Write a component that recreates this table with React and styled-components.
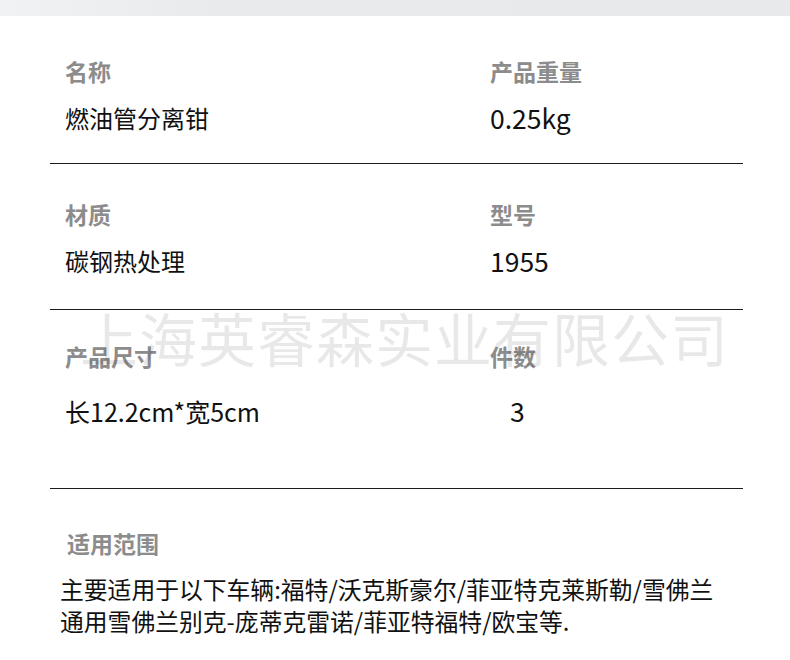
import React from "react";
import styled, { createGlobalStyle } from "styled-components";

const GlobalStyle = createGlobalStyle`
  html, body {
    margin: 0;
    padding: 0;
    background: #ffffff;
  }
  body {
    font-family: "Noto Sans CJK SC", "Noto Sans", sans-serif;
    color: #111111;
  }
`;

const Page = styled.div`
  position: relative;
  width: 790px;
  height: 660px;
  overflow: hidden;
  background: #ffffff;
`;

const TopBand = styled.div`
  height: 16px;
  background: linear-gradient(90deg, #f1f2f3 0%, #e9eaec 28%, #e8e9eb 100%);
`;

const Sheet = styled.div`
  margin-left: 50px;
  width: 693px;
  display: flex;
  flex-direction: column;
`;

const Row = styled.div`
  display: grid;
  grid-template-columns: 425px 1fr;
  padding: ${(p) => p.$pt}px 0 ${(p) => p.$pb}px 15px;
  border-bottom: 1px solid #1c1c1c;
`;

const Cell = styled.div`
  display: flex;
  flex-direction: column;
  gap: ${(p) => p.$gap}px;
`;

const Label = styled.div`
  font-size: 23px;
  line-height: 32px;
  font-weight: 700;
  color: #8c8c8c;
  white-space: nowrap;
`;

const Value = styled.div`
  font-size: ${(p) => p.$size || 24}px;
  line-height: 32px;
  color: #111111;
  white-space: nowrap;
  padding-left: ${(p) => p.$indent || 0}px;
`;

const Section = styled.section`
  display: flex;
  flex-direction: column;
  padding-top: 38px;
  gap: 14px;
`;

const SectionLabel = styled(Label)`
  padding-left: 17px;
`;

const Paragraph = styled.p`
  margin: 0;
  padding-left: 10px;
  font-size: 23.8px;
  line-height: 32px;
  color: #111111;
  white-space: nowrap;
`;

const Watermark = styled.div`
  position: absolute;
  top: 308px;
  left: 80px;
  font-size: 58px;
  line-height: 58px;
  letter-spacing: 1px;
  color: rgba(0, 0, 0, 0.09);
  white-space: nowrap;
  pointer-events: none;
  user-select: none;
`;

const rows = [
  {
    pt: 39,
    gap: 15,
    pb: 29,
    left: { label: "名称", value: "燃油管分离钳", size: 24 },
    right: { label: "产品重量", value: "0.25kg", size: 26.5 },
  },
  {
    pt: 34,
    gap: 15,
    pb: 32,
    left: { label: "材质", value: "碳钢热处理", size: 24 },
    right: { label: "型号", value: "1955", size: 26.5 },
  },
  {
    pt: 30,
    gap: 23,
    pb: 61,
    left: { label: "产品尺寸", value: "长12.2cm*宽5cm", size: 25 },
    right: { label: "件数", value: "3", size: 26.5, indent: 20 },
  },
];

export default function App() {
  return (
    <>
      <GlobalStyle />
      <Page>
        <TopBand />
        <Sheet>
          {rows.map((r) => (
            <Row key={r.left.label} $pt={r.pt} $pb={r.pb}>
              {[r.left, r.right].map((c) => (
                <Cell key={c.label} $gap={r.gap}>
                  <Label>{c.label}</Label>
                  <Value $size={c.size} $indent={c.indent}>
                    {c.value}
                  </Value>
                </Cell>
              ))}
            </Row>
          ))}
          <Section>
            <SectionLabel>适用范围</SectionLabel>
            <Paragraph>
              主要适用于以下车辆:福特/沃克斯豪尔/菲亚特克莱斯勒/雪佛兰
              <br />
              通用雪佛兰别克-庞蒂克雷诺/菲亚特福特/欧宝等.
            </Paragraph>
          </Section>
        </Sheet>
        <Watermark>上海英睿森实业有限公司</Watermark>
      </Page>
    </>
  );
}
